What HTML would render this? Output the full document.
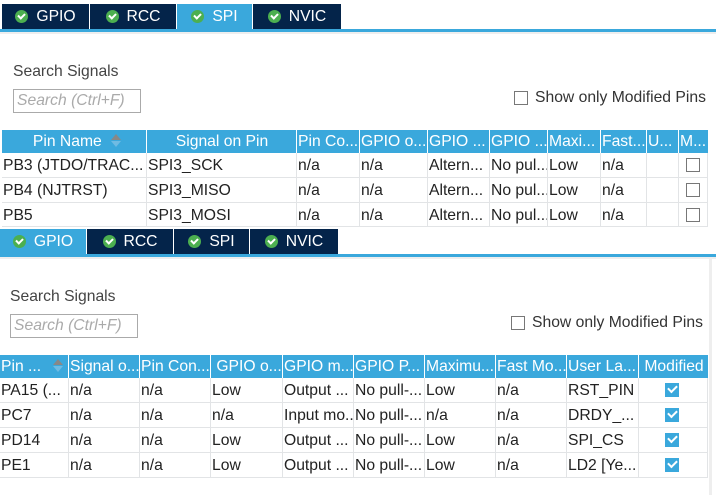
<!DOCTYPE html>
<html><head><meta charset="utf-8"><style>
body{margin:0;width:716px;height:495px;background:#fff;position:relative;overflow:hidden;font-family:"Liberation Sans",sans-serif;font-size:15.7px;color:#222}
div{position:absolute;box-sizing:border-box}
.tab{height:25px;background:#04244a;color:#fff;font-size:15.7px;line-height:25px;text-align:center;white-space:nowrap}
.tab.a{background:#3aa8dc}
.ic{display:inline-block;width:13px;height:13px;border-radius:50%;background:#4caf50;vertical-align:-2px;margin-right:8px;position:relative}
.ic:after{content:"";position:absolute;left:3px;top:2.5px;width:5px;height:3px;border-left:2px solid #fff;border-bottom:2px solid #fff;transform:rotate(-45deg)}
.bar{height:3px;background:#3aa8dc}
.lbl{font-size:15.7px;color:#444}
.inp{border:1px solid #aaa;height:24px;font-style:italic;color:#aaa;font-size:15.7px;line-height:22px;padding-left:3px}
.cb{width:14px;height:14px;border:1px solid #777;background:#fff}
.h{background:#3aa8dc;color:#fff;height:23px;line-height:23px;white-space:nowrap;overflow:hidden;padding-left:1px}
.c{height:25px;line-height:25px;white-space:nowrap;overflow:hidden;border-bottom:1px solid #e2e4e6;border-right:1px solid #e2e4e6;padding-left:1px;color:#222}
.ck{width:14px;height:14px;background:#3aa8dc}
.ck:after{content:"";position:absolute;left:3px;top:2px;width:7px;height:4px;border-left:2px solid #fff;border-bottom:2px solid #fff;transform:rotate(-45deg)}
.sort{position:absolute;width:0;height:0;border-left:5px solid transparent;border-right:5px solid transparent}
</style></head><body>
<!-- TOP -->
<div class="tab" style="left:2px;top:4px;width:87px"><span class="ic"></span>GPIO</div>
<div class="tab" style="left:90px;top:4px;width:86px"><span class="ic"></span>RCC</div>
<div class="tab a" style="left:177px;top:4px;width:75px"><span class="ic"></span>SPI</div>
<div class="tab" style="left:253px;top:4px;width:88px"><span class="ic"></span>NVIC</div>
<div class="bar" style="left:0;top:29px;width:716px"></div>
<div style="left:0;top:32px;width:716px;height:2px;background:#eee"></div>
<div class="lbl" style="left:13px;top:63px">Search Signals</div>
<div class="inp" style="left:13px;top:89px;width:128px">Search (Ctrl+F)</div>
<div class="cb" style="left:514px;top:91px"></div>
<div class="lbl" style="left:535px;top:89px;color:#333">Show only Modified Pins</div>

<div class="h" style="left:2px;top:130px;width:144px;text-align:center">Pin Name <span style="position:relative;display:inline-block;width:10px;height:14px;vertical-align:-2px"><span class="sort" style="top:0;border-bottom:6px solid #888"></span><span class="sort" style="top:7px;border-top:6px solid #6fbbe3"></span></span></div>
<div class="h" style="left:147px;top:130px;width:149px;text-align:center">Signal on Pin</div>
<div class="h" style="left:297px;top:130px;width:62px">Pin Co...</div>
<div class="h" style="left:360px;top:130px;width:67px">GPIO o...</div>
<div class="h" style="left:428px;top:130px;width:61px">GPIO ...</div>
<div class="h" style="left:490px;top:130px;width:57px">GPIO ...</div>
<div class="h" style="left:548px;top:130px;width:52px">Maxi...</div>
<div class="h" style="left:601px;top:130px;width:45px">Fast...</div>
<div class="h" style="left:647px;top:130px;width:31px">U...</div>
<div class="h" style="left:679px;top:130px;width:29px">M...</div>

<div class="c" style="left:2px;top:153px;width:145px">PB3 (JTDO/TRAC...</div>
<div class="c" style="left:147px;top:153px;width:150px">SPI3_SCK</div>
<div class="c" style="left:297px;top:153px;width:63px">n/a</div>
<div class="c" style="left:360px;top:153px;width:68px">n/a</div>
<div class="c" style="left:428px;top:153px;width:62px">Altern...</div>
<div class="c" style="left:490px;top:153px;width:58px">No pul...</div>
<div class="c" style="left:548px;top:153px;width:53px">Low</div>
<div class="c" style="left:601px;top:153px;width:46px">n/a</div>
<div class="c" style="left:647px;top:153px;width:32px"></div>
<div class="c" style="left:679px;top:153px;width:29px"></div>
<div class="cb" style="left:686px;top:158px"></div>

<div class="c" style="left:2px;top:178px;width:145px">PB4 (NJTRST)</div>
<div class="c" style="left:147px;top:178px;width:150px">SPI3_MISO</div>
<div class="c" style="left:297px;top:178px;width:63px">n/a</div>
<div class="c" style="left:360px;top:178px;width:68px">n/a</div>
<div class="c" style="left:428px;top:178px;width:62px">Altern...</div>
<div class="c" style="left:490px;top:178px;width:58px">No pul...</div>
<div class="c" style="left:548px;top:178px;width:53px">Low</div>
<div class="c" style="left:601px;top:178px;width:46px">n/a</div>
<div class="c" style="left:647px;top:178px;width:32px"></div>
<div class="c" style="left:679px;top:178px;width:29px"></div>
<div class="cb" style="left:686px;top:183px"></div>

<div class="c" style="left:2px;top:203px;width:145px;height:24px">PB5</div>
<div class="c" style="left:147px;top:203px;width:150px;height:24px">SPI3_MOSI</div>
<div class="c" style="left:297px;top:203px;width:63px;height:24px">n/a</div>
<div class="c" style="left:360px;top:203px;width:68px;height:24px">n/a</div>
<div class="c" style="left:428px;top:203px;width:62px;height:24px">Altern...</div>
<div class="c" style="left:490px;top:203px;width:58px;height:24px">No pul...</div>
<div class="c" style="left:548px;top:203px;width:53px;height:24px">Low</div>
<div class="c" style="left:601px;top:203px;width:46px;height:24px">n/a</div>
<div class="c" style="left:647px;top:203px;width:32px;height:24px"></div>
<div class="c" style="left:679px;top:203px;width:29px;height:24px"></div>
<div class="cb" style="left:686px;top:208px"></div>

<!-- BOTTOM -->
<div class="tab a" style="left:0;top:229px;width:86px"><span class="ic"></span>GPIO</div>
<div class="tab" style="left:87px;top:229px;width:86px"><span class="ic"></span>RCC</div>
<div class="tab" style="left:174px;top:229px;width:75px"><span class="ic"></span>SPI</div>
<div class="tab" style="left:250px;top:229px;width:88px"><span class="ic"></span>NVIC</div>
<div class="bar" style="left:0;top:254px;width:716px"></div>
<div style="left:0;top:257px;width:716px;height:2px;background:#eee"></div>
<div style="left:709px;top:259px;width:3px;height:236px;background:#eee"></div>
<div class="lbl" style="left:10px;top:288px">Search Signals</div>
<div class="inp" style="left:10px;top:314px;width:128px">Search (Ctrl+F)</div>
<div class="cb" style="left:511px;top:316px"></div>
<div class="lbl" style="left:532px;top:314px;color:#333">Show only Modified Pins</div>

<div class="h" style="left:0;top:355px;width:68px">Pin ... <span style="position:relative;display:inline-block;width:10px;height:14px;vertical-align:-2px;margin-left:8px"><span class="sort" style="top:0;border-bottom:6px solid #888"></span><span class="sort" style="top:7px;border-top:6px solid #6fbbe3"></span></span></div>
<div class="h" style="left:69px;top:355px;width:70px">Signal o...</div>
<div class="h" style="left:140px;top:355px;width:70px">Pin Con...</div>
<div class="h" style="left:211px;top:355px;width:71px">&nbsp;GPIO o...</div>
<div class="h" style="left:283px;top:355px;width:70px">GPIO m...</div>
<div class="h" style="left:354px;top:355px;width:70px">GPIO P...</div>
<div class="h" style="left:425px;top:355px;width:70px">Maximu...</div>
<div class="h" style="left:496px;top:355px;width:70px">Fast Mo...</div>
<div class="h" style="left:567px;top:355px;width:71px">User La...</div>
<div class="h" style="left:639px;top:355px;width:69px;text-align:center">Modified</div>

<div class="c" style="left:0;top:378px;width:69px">PA15 (...</div>
<div class="c" style="left:69px;top:378px;width:71px">n/a</div>
<div class="c" style="left:140px;top:378px;width:71px">n/a</div>
<div class="c" style="left:211px;top:378px;width:72px">Low</div>
<div class="c" style="left:283px;top:378px;width:71px">Output ...</div>
<div class="c" style="left:354px;top:378px;width:71px">No pull-...</div>
<div class="c" style="left:425px;top:378px;width:71px">Low</div>
<div class="c" style="left:496px;top:378px;width:71px">n/a</div>
<div class="c" style="left:567px;top:378px;width:72px">RST_PIN</div>
<div class="c" style="left:639px;top:378px;width:69px"></div>
<div class="ck" style="left:665px;top:383px"></div>

<div class="c" style="left:0;top:403px;width:69px">PC7</div>
<div class="c" style="left:69px;top:403px;width:71px">n/a</div>
<div class="c" style="left:140px;top:403px;width:71px">n/a</div>
<div class="c" style="left:211px;top:403px;width:72px">n/a</div>
<div class="c" style="left:283px;top:403px;width:71px">Input mo...</div>
<div class="c" style="left:354px;top:403px;width:71px">No pull-...</div>
<div class="c" style="left:425px;top:403px;width:71px">n/a</div>
<div class="c" style="left:496px;top:403px;width:71px">n/a</div>
<div class="c" style="left:567px;top:403px;width:72px">DRDY_...</div>
<div class="c" style="left:639px;top:403px;width:69px"></div>
<div class="ck" style="left:665px;top:408px"></div>

<div class="c" style="left:0;top:428px;width:69px">PD14</div>
<div class="c" style="left:69px;top:428px;width:71px">n/a</div>
<div class="c" style="left:140px;top:428px;width:71px">n/a</div>
<div class="c" style="left:211px;top:428px;width:72px">Low</div>
<div class="c" style="left:283px;top:428px;width:71px">Output ...</div>
<div class="c" style="left:354px;top:428px;width:71px">No pull-...</div>
<div class="c" style="left:425px;top:428px;width:71px">Low</div>
<div class="c" style="left:496px;top:428px;width:71px">n/a</div>
<div class="c" style="left:567px;top:428px;width:72px">SPI_CS</div>
<div class="c" style="left:639px;top:428px;width:69px"></div>
<div class="ck" style="left:665px;top:433px"></div>

<div class="c" style="left:0;top:453px;width:69px">PE1</div>
<div class="c" style="left:69px;top:453px;width:71px">n/a</div>
<div class="c" style="left:140px;top:453px;width:71px">n/a</div>
<div class="c" style="left:211px;top:453px;width:72px">Low</div>
<div class="c" style="left:283px;top:453px;width:71px">Output ...</div>
<div class="c" style="left:354px;top:453px;width:71px">No pull-...</div>
<div class="c" style="left:425px;top:453px;width:71px">Low</div>
<div class="c" style="left:496px;top:453px;width:71px">n/a</div>
<div class="c" style="left:567px;top:453px;width:72px">LD2 [Ye...</div>
<div class="c" style="left:639px;top:453px;width:69px"></div>
<div class="ck" style="left:665px;top:458px"></div>
</body></html>
